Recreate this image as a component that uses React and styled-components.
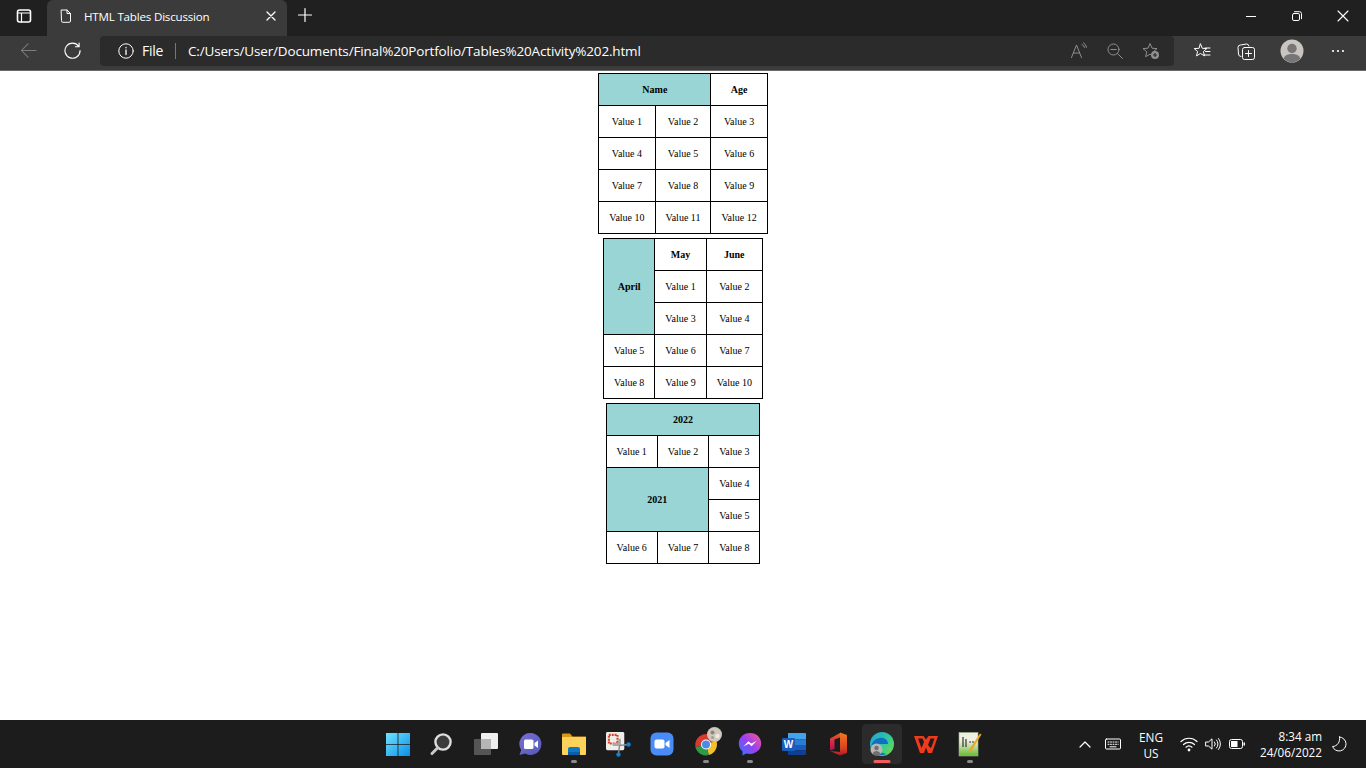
import React from "react";
import styled, { createGlobalStyle } from "styled-components";

const Global = createGlobalStyle`
  html, body { margin: 0; padding: 0; height: 100%; background: #fff; overflow: hidden; }
  #root { height: 100%; }
`;
const UI = `"Open Sans", "Noto Sans", sans-serif`;

const Page = styled.div`display:flex;flex-direction:column;height:768px;width:1366px;`;
const TitleBar = styled.div`display:flex;align-items:stretch;height:36px;background:#202020;color:#fff;font-family:${UI};`;
const SideToggle = styled.div`display:flex;align-items:center;justify-content:center;width:47px;padding-bottom:4px;box-sizing:border-box;`;
const Tab = styled.div`display:flex;align-items:center;width:240px;box-sizing:border-box;padding:0 11px 4px 12px;background:#3b3b3b;border-radius:6px 6px 0 0;`;
const TabTitle = styled.span`flex:1;margin-left:11px;font-size:11.6px;letter-spacing:-.2px;white-space:nowrap;`;
const NewTab = styled.div`display:flex;align-items:center;justify-content:center;width:36px;padding-bottom:6px;box-sizing:border-box;`;
const Spacer = styled.div`flex:1;`;
const WinButton = styled.div`display:flex;align-items:center;justify-content:center;width:46px;padding-bottom:4px;box-sizing:border-box;`;
const Toolbar = styled.div`display:flex;align-items:center;height:35px;box-sizing:border-box;padding:0 7px 5px 0;background:#3b3b3b;border-bottom:1px solid #6a6a6a;color:#fff;font-family:${UI};`;
const ToolBtn = styled.div`display:flex;align-items:center;justify-content:center;flex:none;width:${p => p.$w || 44}px;height:30px;color:${p => p.$dim || "inherit"};`;
const Address = styled.div`display:flex;align-items:center;flex:none;width:1074px;height:30px;margin:0 6px 0 12px;padding:0 5px 0 18px;box-sizing:border-box;background:#2b2b2b;border-radius:4px;`;
const FileLabel = styled.span`margin-left:8px;font-size:14px;letter-spacing:-.3px;`;
const Divider = styled.span`width:1px;height:16px;margin:0 12px;background:#777;`;
const Url = styled.span`flex:1;font-size:13.5px;letter-spacing:-.16px;white-space:nowrap;`;
const Content = styled.main`flex:1;display:flex;flex-direction:column;align-items:center;gap:4px;padding-top:2px;background:#fff;`;
const DataTable = styled.table`border-collapse:collapse;font-family:"Liberation Serif",serif;font-size:10px;color:#000;`;
const Cell = styled.td`height:32px;padding:0 10px;box-sizing:border-box;border:1px solid #000;text-align:center;white-space:nowrap;`;
const Head = styled(Cell).attrs({ as: "th" })`font-weight:700;background:${p => (p.$fill ? "#99d5d4" : "#fff")};`;
const Taskbar = styled.footer`display:grid;grid-template-columns:1fr auto 1fr;align-items:center;height:48px;background:#1c1c1c;color:#fff;font-family:${UI};`;
const Dock = styled.div`grid-column:2;display:flex;margin-left:2px;`;
const Slot = styled.div`position:relative;display:flex;align-items:center;justify-content:center;width:44px;height:48px;
  &::before{content:"";display:${p => (p.$active ? "block" : "none")};position:absolute;left:2px;top:4px;width:40px;height:40px;border-radius:4px;background:#2b2b2b;}
  &::after{content:"";display:${p => (p.$pip ? "block" : "none")};position:absolute;bottom:5px;left:50%;height:3px;border-radius:2px;transform:translateX(-50%);width:${p => (p.$active ? 17 : 6)}px;background:${p => (p.$active ? "#f15c5c" : "#8a8a8a")};}
  & > svg{position:relative;z-index:1;flex:none;overflow:visible;}`;
const Tray = styled.div`grid-column:3;display:flex;align-items:center;justify-content:flex-end;height:48px;`;
const TrayIcon = styled.div`display:flex;align-items:center;justify-content:center;width:${p => p.$w}px;`;
const Lang = styled.div`width:38px;margin:2px 7px 0 5px;text-align:center;line-height:16px;font-size:11.8px;`;
const Clock = styled.div`width:73px;text-align:right;line-height:16px;font-size:11.7px;`;

const Ic = ({ s = 16, vb, children, fill = "none", stroke = "currentColor", sw = 1 }) => (
  <svg width={s} height={s} viewBox={vb || `0 0 ${s} ${s}`} fill={fill} stroke={stroke} strokeWidth={sw} strokeLinecap="round" strokeLinejoin="round">{children}</svg>
);

const Chrome = () => (
  <>
    <SideToggle><Ic s={16}><rect x="1.500" y="2" width="13" height="12" rx="2" strokeWidth="1.600"/><path d="M2 5h12M5.500 5v9" strokeWidth="1.200"/></Ic></SideToggle>
    <Tab>
      <Ic s={14}><path d="M2.500 1h5.500l3.500 3.500V12a1.300 1.300 0 0 1-1.300 1.300H3.800A1.300 1.300 0 0 1 2.500 12zM8 1v3.500h3.500"/></Ic>
      <TabTitle>HTML Tables Discussion</TabTitle>
      <Ic s={10} sw={1.300}><path d="M1 1l8 8M9 1l-8 8"/></Ic>
    </Tab>
    <NewTab><Ic s={16} sw={1.200}><path d="M8 1.500v13M1.500 8h13"/></Ic></NewTab>
    <Spacer/>
    <WinButton><Ic s={10}><path d="M0 5.500h10"/></Ic></WinButton>
    <WinButton><Ic s={10}><rect x=".5" y="2.500" width="7" height="7" rx="1.400"/><path d="M2.500 .7h5a2 2 0 0 1 2 2v5"/></Ic></WinButton>
    <WinButton><Ic s={12} sw={1.100}><path d="M1 1l10 10M11 1L1 11"/></Ic></WinButton>
  </>
);

const Windows = () => (
  <svg width="24" height="24" viewBox="0 0 24 24"><defs><linearGradient id="wg" x1="0" y1="0" x2="1" y2="1"><stop offset="0" stopColor="#6fe4ff"/><stop offset="1" stopColor="#0a8fe8"/></linearGradient></defs><path fill="url(#wg)" d="M0 1h11.600v11.300H0zM12.400 1H24v11.300H12.400zM0 13.100h11.600V24H0zM12.400 13.100H24V24H12.400z"/></svg>
);
const Search = () => (
  <svg width="24" height="24" viewBox="0 0 24 24" fill="none"><circle cx="13" cy="10" r="7.600" fill="#3c3c3c" stroke="#dedede" strokeWidth="2.400"/><path d="M7.500 16l-5.500 5.500" stroke="#c9c9c9" strokeWidth="3" strokeLinecap="round"/></svg>
);
const TaskView = () => (
  <svg width="26" height="24" viewBox="0 0 26 24"><rect x="8" y="1" width="17" height="16" rx="1" fill="#efefef"/><rect x="1" y="7" width="17" height="16" rx="1" fill="#555"/><path d="M8 7h10v10H8z" fill="#b5b5b5"/></svg>
);
const Teams = () => (
  <svg width="24" height="24" viewBox="0 0 24 24"><defs><linearGradient id="tg" x1="0" y1="0" x2="1" y2="1"><stop offset="0" stopColor="#7b6fd6"/><stop offset="1" stopColor="#5258b8"/></linearGradient></defs><path fill="url(#tg)" d="M12.500 1a11 11 0 1 1-5.400 20.600L1.500 23l1.700-5A11 11 0 0 1 12.500 1z"/><rect x="6" y="7.500" width="9.500" height="9.500" rx="1.600" fill="#fff"/><path d="M16.500 11l3.500-2.500v7.500l-3.500-2.500z" fill="#fff"/></svg>
);
const Folder = () => (
  <svg width="24" height="24" viewBox="0 0 24 24"><path d="M0 2.500a1 1 0 0 1 1-1h7l2.500 3H24v3H0z" fill="#d99a12"/><path d="M0 5h24v17a1 1 0 0 1-1 1H1a1 1 0 0 1-1-1z" fill="#fcd25b"/><path d="M6 17a2 2 0 0 1 2-2h8a2 2 0 0 1 2 2v6H6z" fill="#0f78c5"/><path d="M6 20h12v3H6z" fill="#0a5da6"/></svg>
);
const Snip = () => (
  <svg width="25" height="25" viewBox="0 0 26 26"><rect x="0" y="0" width="19" height="19" rx="1.500" fill="#eeeeee"/><rect x="3" y="3" width="9" height="9" fill="none" stroke="#d8431f" strokeWidth="2.200" strokeDasharray="2 1"/><path d="M7 13h7V7" fill="none" stroke="#a8a8a8" strokeWidth="3"/><path d="M14 14l9-1M14 14l-1 9" stroke="#8a8a8a" strokeWidth="1.500"/><circle cx="23.500" cy="13" r="2.300" fill="#1482d0"/><circle cx="13" cy="23.500" r="2.300" fill="#1482d0"/></svg>
);
const Zoom = () => (
  <svg width="24" height="24" viewBox="0 0 24 24"><rect width="23" height="23" x=".5" y=".5" rx="6" fill="#4a8cf7"/><rect x="4.500" y="7.500" width="10" height="9" rx="2" fill="#fff"/><path d="M15.500 11l4-3v8l-4-3z" fill="#fff"/></svg>
);
const ChromeLogo = () => (
  <svg width="34" height="32" viewBox="0 0 34 32">
    <path d="M6.400 19.300A11 11 0 0 1 27.300 12.700L17 16.500z" fill="#d93a30"/>
    <path d="M27.300 12.700A11 11 0 0 1 19.800 27.100L17 16.500z" fill="#f6c026"/>
    <path d="M19.800 27.100A11 11 0 0 1 6.400 19.300L17 16.500z" fill="#2f9a46"/>
    <circle cx="17" cy="16.500" r="5" fill="#fff"/><circle cx="17" cy="16.500" r="4" fill="#4a8ae8"/>
    <circle cx="25.500" cy="6.500" r="7.500" fill="#cfc8bd"/><circle cx="23.500" cy="4.500" r="2" fill="#8d8578"/><circle cx="28.500" cy="8" r="2.200" fill="#efeadf"/><circle cx="23.500" cy="9.500" r="1.500" fill="#a89e8d"/>
  </svg>
);
const Messenger = () => (
  <svg width="24" height="24" viewBox="0 0 24 24"><defs><linearGradient id="mg" x1="0" y1="1" x2="1" y2="0"><stop offset="0" stopColor="#2a7bff"/><stop offset=".5" stopColor="#9a3ff0"/><stop offset="1" stopColor="#ff5a8a"/></linearGradient></defs><path fill="url(#mg)" d="M12 1C5.500 1 .8 5.700.8 11.600c0 3.300 1.400 6 3.700 7.900V23.500l3.700-2c1.200.3 2.500.5 3.800.5 6.500 0 11.200-4.700 11.200-10.400C23.200 5.700 18.500 1 12 1z"/><path fill="#fff" d="M5.500 14.500l4.800-5.300 3 2.400 5.200-2.700-4.800 5.300-3-2.400z"/></svg>
);
const Word = () => (
  <svg width="24" height="24" viewBox="0 0 24 24"><path d="M6 1h17a1 1 0 0 1 1 1v5.500H6z" fill="#41a5ee"/><path d="M6 7.500h18V13H6z" fill="#2b7cd3"/><path d="M6 13h18v5.500H6z" fill="#185abd"/><path d="M6 18.500h18V22a1 1 0 0 1-1 1H6z" fill="#103f91"/><rect x="0" y="6" width="13" height="13" rx="1" fill="#1a5dbb"/><text x="6.500" y="16" textAnchor="middle" fontFamily="Liberation Sans, sans-serif" fontWeight="700" fontSize="10" fill="#fff">W</text></svg>
);
const Office = () => (
  <svg width="17" height="24" viewBox="0 0 17 24"><defs><linearGradient id="og" x1="0" y1="0" x2="0" y2="1"><stop offset="0" stopColor="#e8601f"/><stop offset=".55" stopColor="#d1284a"/><stop offset="1" stopColor="#a81655"/></linearGradient><linearGradient id="og2" x1="0" y1="0" x2="0" y2="1"><stop offset="0" stopColor="#f0791f"/><stop offset=".7" stopColor="#d9401f"/><stop offset="1" stopColor="#a81630"/></linearGradient></defs><path fill="url(#og)" d="M0 6.500L10 1v4.500L4.500 7.500V17L0 18.500z"/><path fill="url(#og2)" d="M10 .5L17 3v18l-7 2.500L0 19l10 1z"/></svg>
);
const Edge = () => (
  <svg width="28" height="28" viewBox="0 0 28 28">
    <defs><linearGradient id="eg" x1="0" y1="0" x2="1" y2=".8"><stop offset="0" stopColor="#1f9fdc"/><stop offset=".55" stopColor="#2fc7a0"/><stop offset="1" stopColor="#6bd94e"/></linearGradient></defs>
    <circle cx="14" cy="14" r="12" fill="url(#eg)"/>
    <path d="M3 19C3 10 10 7 15 8c4 .8 5 4 5 6h-8c-4 0-3 5 1 8 2 1.500 5 2 6 1.700A12 12 0 0 1 3 19z" fill="#0f6fc4"/>
    <circle cx="8.500" cy="19.500" r="6" fill="#b7b7b7"/><circle cx="8.500" cy="18" r="2.200" fill="#6f6f6f"/><path d="M4.500 24a4.200 4.200 0 0 1 8 0 6 6 0 0 1-8 0z" fill="#6f6f6f"/>
  </svg>
);
const Wps = () => (
  <svg width="24" height="18" viewBox="0 0 24 18"><path d="M0 1h9.500L12 4.500 14.500 1H24l-6 17h-4l-2-5.500L10 18H6z" fill="#f03a1c"/><path d="M4 3.500l3.500 9.500 2.500-6-1.500-3.500zM14 10l2.500-6.500h4L17.500 12l-1 1z" fill="#1c1c1c"/></svg>
);
const Notepad = () => (
  <svg width="24" height="26" viewBox="0 0 24 26"><defs><linearGradient id="ng" x1="0" y1="0" x2="0" y2="1"><stop offset=".35" stopColor="#eef0e2"/><stop offset="1" stopColor="#66b82e"/></linearGradient></defs><rect x="1" y="1.500" width="19" height="23.500" fill="url(#ng)" stroke="#9db28a" strokeWidth=".6"/><path d="M5 6v10M8 8v8M11 11h2M14 11h2" stroke="#333" strokeWidth="1.200" fill="none"/><path d="M11 19L22 2.500l1.500 1L13 20.500l-2.500 1z" fill="#e9a72b"/></svg>
);

const dock = [
  [<Windows/>], [<Search/>], [<TaskView/>], [<Teams/>], [<Folder/>, "pip"], [<Snip/>], [<Zoom/>],
  [<ChromeLogo/>, "pip"], [<Messenger/>, "pip"], [<Word/>], [<Office/>], [<Edge/>, "active"], [<Wps/>], [<Notepad/>, "pip"],
];

export default function App() {
  return (
    <Page>
      <Global/>
      <TitleBar><Chrome/></TitleBar>
      <Toolbar>
        <ToolBtn $w={56} $dim="#7d7d7d"><Ic s={17} vb="0 0 18 18" sw={1.100}><path d="M17 9H1.500M8.500 2L1.500 9l7 7"/></Ic></ToolBtn>
        <ToolBtn $w={32}><Ic s={17} vb="0 0 18 18" sw={1.200}><path d="M15.500 4.500A8 8 0 1 0 17 9M16 1v4h-4"/></Ic></ToolBtn>
        <Address>
          <Ic s={16} sw={1}><circle cx="8" cy="8" r="7.200"/><path d="M8 7v4.500M8 4.400v.4" strokeWidth="1.300"/></Ic>
          <FileLabel>File</FileLabel>
          <Divider/>
          <Url>C:/Users/User/Documents/Final%20Portfolio/Tables%20Activity%202.html</Url>
          <ToolBtn $w={36} $dim="#8f8f8f"><Ic s={18} sw={1}><path d="M1.500 15.500L6.500 3l5 12.500M3.500 11h6M12 2.500a4 4 0 0 1 2.500 3M13.500 .8a6 6 0 0 1 3 4.500"/></Ic></ToolBtn>
          <ToolBtn $w={36} $dim="#8f8f8f"><Ic s={16} sw={1}><circle cx="6.500" cy="6.500" r="5.500"/><path d="M3.800 6.500h5.400M10.500 10.500l5 5"/></Ic></ToolBtn>
          <ToolBtn $w={36} $dim="#8f8f8f"><svg width="18" height="18" viewBox="0 0 18 18" fill="none" stroke="currentColor" strokeLinejoin="round"><path d="M8 1.500l2 4.700 5 .4-3.800 3.200 1.200 4.900L8 12.200l-4.400 2.500 1.200-4.900L1 6.600l5-.4z"/><circle cx="13" cy="13" r="4" fill="#8f8f8f" stroke="none"/><path d="M13 11v4M11 13h4" stroke="#2b2b2b" strokeWidth="1.100"/></svg></ToolBtn>
        </Address>
        <ToolBtn><Ic s={18} sw={1}><path d="M7.500 2l1.800 4.300 4.500.3-3.400 2.900 1.100 4.400-4-2.400-4 2.400 1.100-4.400L1.200 6.600l4.500-.3zM12 6h5M12.500 9.500H17M11 13h6"/></Ic></ToolBtn>
        <ToolBtn><Ic s={18} sw={1}><path d="M4 14.500A2.500 2.500 0 0 1 1.500 12l-.5-6.500A2.500 2.500 0 0 1 3.500 3l6-1a2.500 2.500 0 0 1 2.500 2"/><rect x="5.500" y="5.500" width="12" height="12" rx="2"/><path d="M11.500 8.500v6M8.500 11.500h6"/></Ic></ToolBtn>
        <ToolBtn $w={48}><svg width="24" height="24" viewBox="0 0 24 24"><circle cx="12" cy="12" r="11.500" fill="#c9c6c2"/><circle cx="12" cy="9.500" r="4.700" fill="#767676"/><path d="M3.500 19.500C5 16 8 15 12 15s7 1 8.500 4.500A11.500 11.500 0 0 1 3.500 19.500z" fill="#767676"/></svg></ToolBtn>
        <ToolBtn $w={44}><Ic s={16} fill="currentColor" stroke="none"><circle cx="3" cy="8" r="1.100"/><circle cx="8" cy="8" r="1.100"/><circle cx="13" cy="8" r="1.100"/></Ic></ToolBtn>
      </Toolbar>
      <Content>
        <DataTable><tbody>
          <tr><Head colSpan={2} $fill>Name</Head><Head>Age</Head></tr>
          <tr><Cell>Value 1</Cell><Cell>Value 2</Cell><Cell>Value 3</Cell></tr>
          <tr><Cell>Value 4</Cell><Cell>Value 5</Cell><Cell>Value 6</Cell></tr>
          <tr><Cell>Value 7</Cell><Cell>Value 8</Cell><Cell>Value 9</Cell></tr>
          <tr><Cell>Value 10</Cell><Cell>Value 11</Cell><Cell>Value 12</Cell></tr>
        </tbody></DataTable>
        <DataTable><tbody>
          <tr><Head rowSpan={3} $fill>April</Head><Head>May</Head><Head>June</Head></tr>
          <tr><Cell>Value 1</Cell><Cell>Value 2</Cell></tr>
          <tr><Cell>Value 3</Cell><Cell>Value 4</Cell></tr>
          <tr><Cell>Value 5</Cell><Cell>Value 6</Cell><Cell>Value 7</Cell></tr>
          <tr><Cell>Value 8</Cell><Cell>Value 9</Cell><Cell>Value 10</Cell></tr>
        </tbody></DataTable>
        <DataTable><tbody>
          <tr><Head colSpan={3} $fill>2022</Head></tr>
          <tr><Cell>Value 1</Cell><Cell>Value 2</Cell><Cell>Value 3</Cell></tr>
          <tr><Head colSpan={2} rowSpan={2} $fill>2021</Head><Cell>Value 4</Cell></tr>
          <tr><Cell>Value 5</Cell></tr>
          <tr><Cell>Value 6</Cell><Cell>Value 7</Cell><Cell>Value 8</Cell></tr>
        </tbody></DataTable>
      </Content>
      <Taskbar>
        <Dock>
          {dock.map(([icon, flag], i) => (
            <Slot key={i} $pip={!!flag} $active={flag === "active"}>{icon}</Slot>
          ))}
        </Dock>
        <Tray>
          <TrayIcon $w={28}><Ic s={14} sw={1.200}><path d="M2 10l5-5 5 5"/></Ic></TrayIcon>
          <TrayIcon $w={28}><Ic s={16} sw={1}><rect x=".5" y="3" width="15" height="10" rx="1"/><path d="M3 6h1M5.500 6h1M8 6h1M10.500 6h1M13 6h.2M3 8.300h1M5.500 8.300h1M8 8.300h1M10.500 8.300h1M13 8.300h.2M5 10.800h6"/></Ic></TrayIcon>
          <Lang>ENG<br/>US</Lang>
          <TrayIcon $w={24}><Ic s={18} sw={1.200}><path d="M1 6.500a11.500 11.500 0 0 1 16 0M3.500 9.500a8 8 0 0 1 11 0M6 12.200a4.500 4.500 0 0 1 6 0"/><circle cx="9" cy="15" r=".8" fill="currentColor"/></Ic></TrayIcon>
          <TrayIcon $w={24}><Ic s={16} sw={1}><path d="M1 6h2.500L7 2.800v10.400L3.500 10H1zM9.500 6a3 3 0 0 1 0 4M11.500 4a6 6 0 0 1 0 8M13.500 2.500a8.500 8.500 0 0 1 0 11"/></Ic></TrayIcon>
          <TrayIcon $w={24}><svg width="16" height="12" viewBox="0 0 16 12" fill="none"><rect x=".5" y="1.500" width="13" height="9" rx="2" stroke="#fff"/><rect x="2" y="3" width="6.500" height="6" fill="#fff"/><rect x="14.500" y="4.500" width="1.500" height="3" fill="#fff"/></svg></TrayIcon>
          <Clock>8:34 am<br/>24/06/2022</Clock>
          <TrayIcon $w={34}><Ic s={16} sw={1}><path d="M8.500 1a7 7 0 1 1-7 9.500C6 10.500 9.500 6 8.500 1z"/></Ic></TrayIcon>
          <TrayIcon $w={10}/>
        </Tray>
      </Taskbar>
    </Page>
  );
}
